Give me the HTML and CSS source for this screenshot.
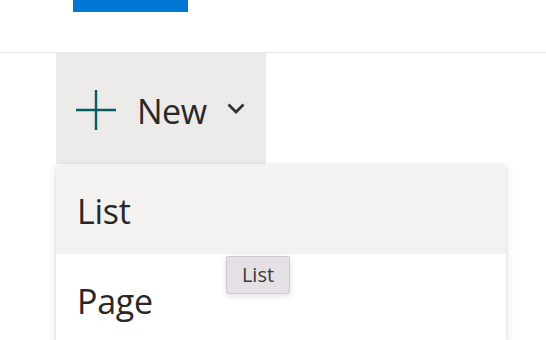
FILE: index.html
```html
<!DOCTYPE html>
<html lang="en">
<head>
  <meta charset="UTF-8">
  <meta name="viewport" content="width=device-width, initial-scale=1.0">
  <title>New menu</title>
  <link rel="stylesheet" href="styles.css">
</head>
<body>
  <!-- Top bar -->
  <div class="topbar">
    <div class="topbar-accent"></div>
  </div>

  <!-- Command bar -->
  <div class="commands">
    <button class="new-btn">
      <svg class="plus" width="40" height="40" viewBox="0 0 40 40">
        <path d="M20 0V40M0 20H40" stroke="#0a5d5f" stroke-width="2.4" fill="none"/>
      </svg>
      <span class="new-label">New</span>
      <svg class="chevron" width="18" height="11" viewBox="0 0 18 11">
        <path d="M1.5 1.5L9 9L16.5 1.5" stroke="#323130" stroke-width="2.8" fill="none"/>
      </svg>
    </button>

    <!-- Dropdown menu -->
    <ul class="menu">
      <li class="menu-item hovered">List</li>
      <li class="menu-item">Page</li>
    </ul>

    <div class="tooltip">List</div>
  </div>
</body>
</html>
```

FILE: styles.css
```css
body {
  margin: 0;
  background: #fff;
  font-family: "Open Sans", "Noto Sans", sans-serif;
  color: #292827;
  overflow: hidden;
}
.topbar {
  height: 52px;
  border-bottom: 1px solid #e8e8e8;
  padding-left: 73px;
}
.topbar-accent {
  width: 115px;
  height: 12px;
  background-color: #0078d4;
}
.commands {
  position: relative;
  padding-left: 56px;
}
.new-btn {
  display: flex;
  align-items: center;
  width: 210px;
  height: 111px;
  padding: 0 0 0 20px;
  border: none;
  background-color: #edebe9;
  font-family: inherit;
  color: #292827;
  cursor: pointer;
}
.plus {
  margin-top: 3px;
}
.new-label {
  font-size: 34px;
  margin-left: 21px;
  margin-top: 4px;
  letter-spacing: -0.5px;
}
.chevron {
  margin-left: 20px;
  margin-top: -1px;
}
.menu {
  list-style: none;
  margin: 0;
  padding: 0;
  width: 450px;
  background: #fff;
  border-radius: 4px;
  box-shadow: 0 3px 8px rgba(0, 0, 0, 0.13), 0 1px 3px rgba(0, 0, 0, 0.08);
  overflow: hidden;
}
.menu-item {
  height: 90px;
  line-height: 94px;
  padding-left: 21px;
  font-size: 34px;
  letter-spacing: -0.3px;
}
.menu-item.hovered {
  background-color: #f3f2f1;
}
.tooltip {
  position: absolute;
  left: 226px;
  top: 203px;
  width: 62px;
  height: 36px;
  line-height: 36px;
  text-align: center;
  font-size: 20px;
  color: #3b3a39;
  background-color: #e4e0e5;
  border: 1px solid #cfccd0;
  border-radius: 2px;
  box-shadow: 0 2px 6px rgba(0, 0, 0, 0.12);
}
```
